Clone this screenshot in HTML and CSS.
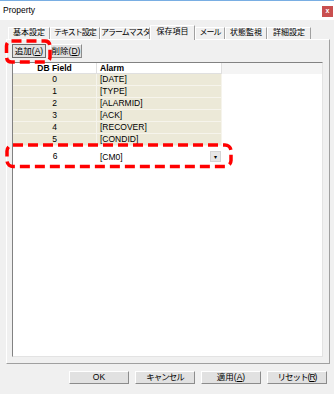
FILE: index.html
```html
<!DOCTYPE html>
<html lang="ja">
<head>
    <meta charset="UTF-8">
    <title>Property</title>
    <link rel="stylesheet" href="styles.css">
</head>
<body>

<div class="window">
    <div class="titlebar">
        <span class="title">Property</span>
        <span class="close">x</span>
    </div>

    <div class="tabs">
        <div class="tab w42">基本設定</div>
        <div class="tab w50 narrow">テキスト設定</div>
        <div class="tab w50 narrow">アラームマスタ</div>
        <div class="tab w45 active">保存項目</div>
        <div class="tab w30 narrow">メール</div>
        <div class="tab w42">状態監視</div>
        <div class="tab w44">詳細設定</div>
    </div>

    <div class="panel">
        <div class="toolbar">
            <div class="btn btn-add">追加(<u>A</u>)</div>
            <div class="btn btn-del">削除(<u>D</u>)</div>
        </div>

        <div class="grid">
            <div class="grid-head">
                <div class="hcell c1">DB Field</div>
                <div class="hcell c2">Alarm</div>
            </div>
            <div class="row"><div class="cell c1">0</div><div class="cell c2">[DATE]</div></div>
            <div class="row"><div class="cell c1">1</div><div class="cell c2">[TYPE]</div></div>
            <div class="row"><div class="cell c1">2</div><div class="cell c2">[ALARMID]</div></div>
            <div class="row"><div class="cell c1">3</div><div class="cell c2">[ACK]</div></div>
            <div class="row"><div class="cell c1">4</div><div class="cell c2">[RECOVER]</div></div>
            <div class="row"><div class="cell c1">5</div><div class="cell c2">[CONDID]</div></div>
            <div class="row row-edit">
                <div class="cell c1">6</div>
                <div class="combo">
                    <span class="combo-text">[CM0]</span>
                    <span class="combo-arrow">&#9662;</span>
                </div>
            </div>
        </div>
    </div>

    <div class="footer">
        <div class="btn btn-foot">OK</div>
        <div class="btn btn-foot narrow">キャンセル</div>
        <div class="btn btn-foot">適用(<u>A</u>)</div>
        <div class="btn btn-foot narrow">リセット(<u>R</u>)</div>
    </div>

    <!-- red callouts drawn over the dialog -->
    <svg class="marks" width="334" height="394" viewBox="0 0 334 394">
        <rect x="6.5" y="41" width="43.5" height="21" rx="5" />
        <rect x="7" y="145" width="224" height="21.5" rx="6" />
    </svg>
</div>

</body>
</html>
```

FILE: styles.css
```css
* {
    box-sizing: border-box;
}

body {
    margin: 0;
    background-color: #f0f0f0;
    color: #000;
    font-family: "Liberation Sans", "Noto Sans CJK JP", sans-serif;
    font-size: 8.5px;
}

.window {
    position: relative;
    width: 334px;
    height: 394px;
    overflow: hidden;
}

/* title bar */
.titlebar {
    height: 20px;
    border-top: 1px solid #79aee3;
    background-color: #fff;
    display: flex;
    justify-content: space-between;
    align-items: flex-start;
}

.title {
    margin: 4px 0 0 3px;
    line-height: 11px;
}

.close {
    margin: 5px 1px 0 0;
    width: 11px;
    height: 11px;
    background-color: #c94f4f;
    color: #fff;
    font-size: 7px;
    line-height: 10px;
    text-align: center;
    font-weight: bold;
}

/* tabs */
.tabs {
    display: flex;
    align-items: flex-end;
    height: 19px;
    padding-left: 8px;
}

.tab {
    height: 12px;
    line-height: 10px;
    font-size: 8px;
    text-align: center;
    white-space: nowrap;
    overflow: hidden;
    border-top: 1px solid #fff;
    border-left: 1px solid #fff;
    border-right: 1px solid #a0a0a0;
}

/* katakana is proportional in the original font */
.narrow {
    letter-spacing: -1px;
}

.tab.active {
    position: relative;
    z-index: 1;
    height: 15px;
    margin-bottom: -1px;
    line-height: 12px;
    background-color: #f0f0f0;
}

.w30 { width: 30px; }
.w42 { width: 42px; }
.w44 { width: 44px; }
.w45 { width: 45px; }
.w50 { width: 50px; }

/* tab page */
.panel {
    margin-left: 6px;
    width: 324px;
    height: 325px;
    padding: 4px 0 0 5px;
    border: 1px solid;
    border-color: #fff #a0a0a0 #a0a0a0 #fff;
}

.toolbar {
    display: flex;
    gap: 4px;
}

.btn {
    height: 14px;
    line-height: 12px;
    text-align: center;
    white-space: nowrap;
    background-color: #e1e1e1;
    border: 1px solid;
    border-color: #fff #8c8c8c #8c8c8c #fff;
}

.btn-add {
    width: 34px;
    border-color: #6d6d6d;
}

.btn-del {
    width: 32px;
}

/* list grid */
.grid {
    margin-top: 4px;
    width: 311px;
    height: 295px;
    background-color: #fff;
    border: 1px solid;
    border-color: #828282 #e3e3e3 #e3e3e3 #828282;
}

.grid-head {
    display: flex;
    height: 11px;
    background-color: #f4f4f4;
}

.hcell {
    font-weight: bold;
    line-height: 10px;
    background-color: #fff;
    border-right: 1px solid #e0e0e0;
    border-bottom: 1px solid #e0e0e0;
}

.c1 {
    width: 84px;
    text-align: center;
}

.c2 {
    width: 125px;
    padding-left: 3px;
}

.row {
    display: flex;
    height: 12px;
}

.cell {
    line-height: 11px;
    background-color: #ece9d8;
    border-right: 1px solid #f6f4ec;
    border-bottom: 1px solid #f6f4ec;
}

.row-edit {
    height: 21px;
    align-items: center;
}

.row-edit .cell {
    background-color: #fff;
    border: none;
}

.combo {
    width: 125px;
    height: 13px;
    padding-left: 3px;
    display: flex;
    justify-content: space-between;
    align-items: center;
    background-color: #fff;
}

.combo-arrow {
    width: 11px;
    height: 11px;
    margin-right: 1px;
    font-size: 6px;
    line-height: 10px;
    text-align: center;
    background-color: #e6e6e6;
    border: 1px solid #d4d4d4;
}

/* dialog buttons */
.footer {
    display: flex;
    justify-content: flex-end;
    gap: 6px;
    padding: 7px 7px 0 0;
}

.btn-foot {
    width: 60px;
    height: 13px;
    line-height: 11px;
}

/* red dashed callouts */
.marks {
    position: absolute;
    top: 0;
    left: 0;
    pointer-events: none;
}

.marks rect {
    fill: none;
    stroke: #f00;
    stroke-width: 3.5;
    stroke-dasharray: 10 5;
}
```
